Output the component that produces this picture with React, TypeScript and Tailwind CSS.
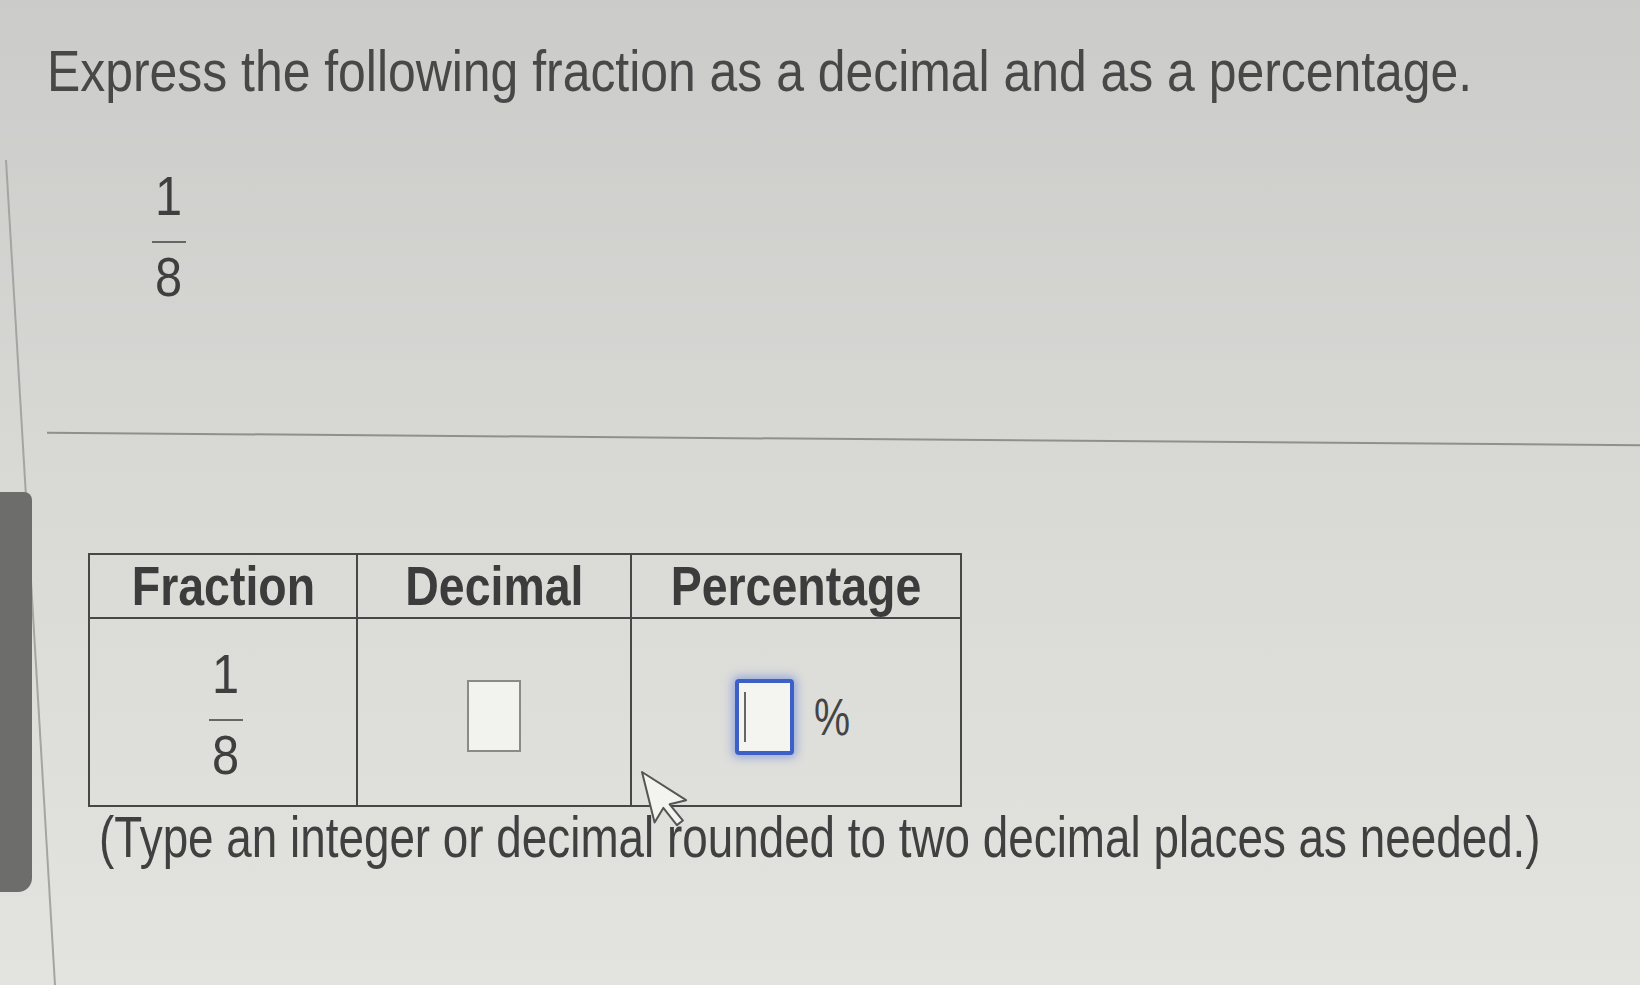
import React from "react";

const font = { fontFamily: '"Liberation Sans", Arial, sans-serif' };

function Fraction() {
  return (
    <div className="inline-flex flex-col items-center">
      <span className="block text-[56px] leading-none text-[#3f3f3f] scale-x-[0.87]">1</span>
      <div className="mt-[17px] h-[2px] w-[34px] bg-[#666]" />
      <span className="mt-[6px] block text-[56px] leading-none text-[#3f3f3f] scale-x-[0.87]">8</span>
    </div>
  );
}

export default function App() {
  return (
    <div
      className="relative h-[985px] w-[1640px] overflow-hidden bg-linear-to-b from-[#cbccc9] via-[#d9dad6] to-[#e3e3df]"
      style={font}
    >
      {/* slanted panel edge */}
      <svg className="pointer-events-none absolute left-0 top-0" width="80" height="985">
        <line x1="6" y1="160" x2="55" y2="985" stroke="#a4a5a2" strokeWidth="2" />
      </svg>
      {/* scrollbar thumb */}
      <div className="absolute left-0 top-[492px] h-[400px] w-[32px] rounded-br-[14px] rounded-tr-[8px] bg-[#6d6e6c]" />

      <div className="flex flex-col pl-[47px] pt-[42px]">
        <h1 className="text-[58px] font-normal leading-none text-[#484848]">
          <span className="inline-block origin-left scale-x-[0.86] whitespace-nowrap">
            Express the following fraction as a decimal and as a percentage.
          </span>
        </h1>

        <div className="ml-[105px] mt-[68px] flex">
          <Fraction />
        </div>

        <div className="mt-[133px] h-[2px] w-full rotate-[0.45deg] bg-[#8f908d]" />

        <table className="ml-[41px] mt-[113px] w-[872px] table-fixed border-collapse border-2 border-[#474747]">
          <colgroup>
            <col className="w-[268px]" />
            <col className="w-[274px]" />
            <col className="w-[330px]" />
          </colgroup>
          <thead>
            <tr className="h-[64px]">
              {["Fraction", "Decimal", "Percentage"].map((h) => (
                <th
                  key={h}
                  className="border-2 border-[#474747] p-0 text-center text-[56px] font-bold leading-none text-[#3c3c3c]"
                >
                  <span className="inline-block scale-x-[0.83] whitespace-nowrap">{h}</span>
                </th>
              ))}
            </tr>
          </thead>
          <tbody>
            <tr className="h-[188px]">
              <td className="border-2 border-[#474747] p-0 text-center align-middle">
                <div className="flex justify-center pl-[6px] pt-[4px]">
                  <Fraction />
                </div>
              </td>
              <td className="border-2 border-[#474747] p-0 align-middle">
                <div className="flex justify-center pt-[8px]">
                  <div className="h-[72px] w-[54px] border-2 border-[#8a8a8a] bg-[#f2f2ef]" />
                </div>
              </td>
              <td className="border-2 border-[#474747] p-0 align-middle">
                <div className="flex items-center justify-center gap-[20px] pr-[4px] pt-[10px]">
                  <div className="flex h-[76px] w-[59px] items-center rounded-[4px] border-[4px] border-[#3d60c6] bg-[#f4f4f1] pl-[5px] shadow-[0_0_8px_3px_rgba(90,120,220,0.5)]">
                    <div className="h-[50px] w-[2px] bg-[#666]" />
                  </div>
                  <span className="inline-block w-[40px] origin-left scale-x-[0.78] text-[52px] leading-none text-[#444]">
                    %
                  </span>
                </div>
              </td>
            </tr>
          </tbody>
        </table>

        <p className="ml-[52px] mt-[1px] text-[58px] leading-none text-[#404040]">
          <span className="inline-block origin-left scale-x-[0.79] whitespace-nowrap">
            (Type an integer or decimal rounded to two decimal places as needed.)
          </span>
        </p>
      </div>

      {/* mouse pointer */}
      <svg className="pointer-events-none absolute left-[636px] top-[768px]" width="60" height="70" viewBox="0 0 60 70">
        <path
          d="M6 4 L6 56 L18 44 L27 64 L34 61 L25 42 L42 42 Z"
          fill="#f3f3f0"
          stroke="#555"
          strokeWidth="2"
          strokeLinejoin="round"
          transform="rotate(-14 6 4)"
        />
      </svg>
    </div>
  );
}
